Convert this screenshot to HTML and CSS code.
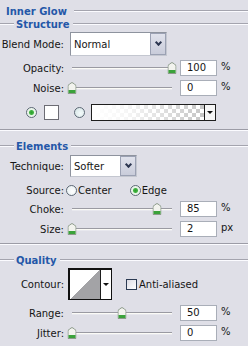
FILE: index.html
```html
<!DOCTYPE html>
<html>
<head>
<meta charset="utf-8">
<link rel="stylesheet" href="styles.css">
</head>
<body>
<div class="panel">
  <div class="title"><span class="head">Inner Glow</span><i class="rule"></i></div>

  <section class="group structure">
    <div class="legend"><i class="lead"></i><span class="head">Structure</span><i class="rule"></i></div>
    <div class="row r-blend">
      <span class="lbl">Blend Mode:</span>
      <div class="select blend"><span class="val">Normal</span><span class="btn"><i class="chev"></i></span></div>
    </div>
    <div class="row r-opacity">
      <span class="lbl">Opacity:</span>
      <div class="slider"><span class="thumb" style="left:100%"><svg width="9" height="12" viewBox="0 0 9 12"><path d="M0.5 4.5 Q0.5 3 2 2 L4.5 0.5 L7 2 Q8.5 3 8.5 4.5 V11.5 H0.5 Z" fill="#f2f3ee" stroke="#8c9a8a"/><rect x="1" y="8" width="7" height="3" fill="#3aa23a"/></svg></span></div>
      <span class="num">100</span><span class="unit">%</span>
    </div>
    <div class="row r-noise">
      <span class="lbl">Noise:</span>
      <div class="slider"><span class="thumb" style="left:0%"><svg width="9" height="12" viewBox="0 0 9 12"><path d="M0.5 4.5 Q0.5 3 2 2 L4.5 0.5 L7 2 Q8.5 3 8.5 4.5 V11.5 H0.5 Z" fill="#f2f3ee" stroke="#8c9a8a"/><rect x="1" y="8" width="7" height="3" fill="#3aa23a"/></svg></span></div>
      <span class="num">0</span><span class="unit">%</span>
    </div>
    <div class="row r-color">
      <span class="radio on"></span>
      <span class="swatch"></span>
      <span class="radio r2"></span>
      <div class="gradient"><span class="gfill"></span><span class="arrow"><i class="tri"></i></span></div>
    </div>
  </section>

  <section class="group elements">
    <div class="legend"><i class="lead"></i><span class="head">Elements</span><i class="rule"></i></div>
    <div class="row r-tech">
      <span class="lbl">Technique:</span>
      <div class="select tech"><span class="val">Softer</span><span class="btn"><i class="chev"></i></span></div>
    </div>
    <div class="row r-source">
      <span class="lbl">Source:</span>
      <span class="radio src"></span><span class="opt">Center</span>
      <span class="radio on src2"></span><span class="opt">Edge</span>
    </div>
    <div class="row r-choke">
      <span class="lbl">Choke:</span>
      <div class="slider"><span class="thumb" style="left:85%"><svg width="9" height="12" viewBox="0 0 9 12"><path d="M0.5 4.5 Q0.5 3 2 2 L4.5 0.5 L7 2 Q8.5 3 8.5 4.5 V11.5 H0.5 Z" fill="#f2f3ee" stroke="#8c9a8a"/><rect x="1" y="8" width="7" height="3" fill="#3aa23a"/></svg></span></div>
      <span class="num">85</span><span class="unit">%</span>
    </div>
    <div class="row r-size">
      <span class="lbl">Size:</span>
      <div class="slider"><span class="thumb" style="left:0%"><svg width="9" height="12" viewBox="0 0 9 12"><path d="M0.5 4.5 Q0.5 3 2 2 L4.5 0.5 L7 2 Q8.5 3 8.5 4.5 V11.5 H0.5 Z" fill="#f2f3ee" stroke="#8c9a8a"/><rect x="1" y="8" width="7" height="3" fill="#3aa23a"/></svg></span></div>
      <span class="num">2</span><span class="unit">px</span>
    </div>
  </section>

  <section class="group quality">
    <div class="legend"><i class="lead"></i><span class="head">Quality</span><i class="rule"></i></div>
    <div class="row r-contour">
      <span class="lbl">Contour:</span>
      <div class="contour"><span class="curve"></span><span class="arrow"><i class="tri"></i></span></div>
      <span class="check"></span><span class="opt">Anti-aliased</span>
    </div>
    <div class="row r-range">
      <span class="lbl">Range:</span>
      <div class="slider"><span class="thumb" style="left:50%"><svg width="9" height="12" viewBox="0 0 9 12"><path d="M0.5 4.5 Q0.5 3 2 2 L4.5 0.5 L7 2 Q8.5 3 8.5 4.5 V11.5 H0.5 Z" fill="#f2f3ee" stroke="#8c9a8a"/><rect x="1" y="8" width="7" height="3" fill="#3aa23a"/></svg></span></div>
      <span class="num">50</span><span class="unit">%</span>
    </div>
    <div class="row r-jitter">
      <span class="lbl">Jitter:</span>
      <div class="slider"><span class="thumb" style="left:0%"><svg width="9" height="12" viewBox="0 0 9 12"><path d="M0.5 4.5 Q0.5 3 2 2 L4.5 0.5 L7 2 Q8.5 3 8.5 4.5 V11.5 H0.5 Z" fill="#f2f3ee" stroke="#8c9a8a"/><rect x="1" y="8" width="7" height="3" fill="#3aa23a"/></svg></span></div>
      <span class="num">0</span><span class="unit">%</span>
    </div>
  </section>
</div>
</body>
</html>
```

FILE: styles.css
```css
* { box-sizing: border-box; margin: 0; padding: 0; }
html, body { width: 248px; height: 346px; overflow: hidden; }
body {
  background: #dfdfe7;
  font-family: "DejaVu Sans", "Liberation Sans", sans-serif;
  font-size: 10px;
  color: #151515;
}
.panel { width: 248px; }

.head { font-weight: bold; color: #2457a8; white-space: nowrap; }
.rule {
  flex: 1;
  height: 2px;
  border-top: 1px solid #a4a4ae;
  border-bottom: 1px solid #fbfbff;
}
.lead {
  width: 14px;
  height: 2px;
  border-top: 1px solid #a4a4ae;
  border-bottom: 1px solid #fbfbff;
}

.title {
  display: flex;
  align-items: center;
  height: 18px;
  padding-top: 4px;
  padding-left: 6px;
}
.title .rule { margin-left: 7px; }

.legend { display: flex; align-items: center; height: 12px; }
.legend .head { padding: 0 3px 0 2px; }

.group {
  border-bottom: 1px solid #9c9ca6;
  box-shadow: 0 1px 0 #fbfbff;
}
.structure { padding-bottom: 8px; }
.elements { margin-top: 10px; padding-bottom: 6px; }
.quality { margin-top: 10px; border-bottom: none; box-shadow: none; }

.row { display: flex; align-items: center; height: 16px; }
.lbl { width: 64px; text-align: right; white-space: nowrap; flex: none; }

.r-blend { margin-top: 2px; height: 24px; }
.r-opacity { margin-top: 4px; }
.r-noise { margin-top: 4px; }
.r-color { margin-top: 8px; height: 17px; }
.r-tech { margin-top: 3px; height: 22px; }
.r-source { margin-top: 5px; }
.r-choke { margin-top: 3px; }
.r-size { margin-top: 4px; }
.r-contour { margin-top: 2px; height: 32px; }
.r-range { margin-top: 5px; }
.r-jitter { margin-top: 4px; }

/* select */
.select {
  display: flex;
  margin-left: 6px;
  height: 100%;
  background: #fff;
  border: 1px solid #8e939e;
  border-right-color: #c4c7d0;
  border-bottom-color: #c4c7d0;
}
.select .val { flex: 1; padding-left: 3px; align-self: center; padding-top: 1px; }
.select.blend { width: 97px; }
.select.tech { width: 67px; }
.select .btn {
  width: 16px;
  background: linear-gradient(#e0e2ec, #c9ccda);
  border: 1px solid #9ba1b3;
  display: flex;
  align-items: center;
  justify-content: center;
}
.chev {
  width: 5px;
  height: 5px;
  border-right: 2px solid #2c3650;
  border-bottom: 2px solid #2c3650;
  transform: rotate(45deg);
  margin-top: -3px;
}

/* slider */
.slider {
  position: relative;
  width: 100px;
  height: 3px;
  margin-left: 8px;
  background: #fbfbf6;
  border-top: 1px solid #9a9aa2;
  border-bottom: 1px solid #e8e8ee;
}
.thumb {
  position: absolute;
  top: 50%;
  width: 9px;
  height: 12px;
  transform: translate(-50%, -50%);
  display: block;
}
.thumb svg { display: block; }

.num {
  width: 37px;
  height: 16px;
  margin-left: 8px;
  background: #fff;
  border: 1px solid #a9aeb8;
  padding-left: 6px;
  line-height: 14px;
}
.unit { margin-left: 4px; margin-top: -4px; }

/* radios */
.radio {
  width: 11px;
  height: 11px;
  border-radius: 50%;
  border: 1px solid #5d6875;
  background: radial-gradient(circle at 60% 60%, #ffffff 0, #e2ebee 100%);
  flex: none;
}
.radio.on {
  background: radial-gradient(circle, #2c9e2c 0, #43b443 2px, #e6f3e6 3px, #fafffa 100%);
}
.r-color .radio.on { margin-left: 26px; }
.swatch {
  width: 15px;
  height: 15px;
  margin-left: 7px;
  background: #fff;
  border: 1px solid #6c6c74;
}
.radio.r2 { margin-left: 15px; background: radial-gradient(circle at 60% 60%, #f4fbfb 0, #d2e2e4 100%); }
.gradient {
  display: flex;
  width: 125px;
  height: 17px;
  margin-left: 6px;
  border: 1px solid #1e1e1e;
}
.gfill {
  flex: 1;
  background:
    linear-gradient(to right, #ffffff 0%, rgba(255,255,255,0.85) 30%, rgba(255,255,255,0) 100%),
    repeating-conic-gradient(#c6c6c6 0 25%, #ffffff 0 50%) 0 0 / 8px 8px;
}
.arrow {
  width: 11px;
  border-left: 1px solid #1e1e1e;
  background: #f6f6f6;
  display: flex;
  align-items: center;
  justify-content: center;
}
.tri {
  width: 0;
  height: 0;
  border-left: 3px solid transparent;
  border-right: 3px solid transparent;
  border-top: 3px solid #111;
}

.radio.src { margin-left: 2px; }
.opt { margin-left: 1px; white-space: nowrap; }
.radio.src2 { margin-left: 18px; }

/* contour */
.contour {
  display: flex;
  width: 44px;
  height: 32px;
  margin-left: 4px;
  border: 1px solid #111;
  border-left-width: 2px;
  border-top-width: 2px;
}
.curve {
  flex: 1;
  background: linear-gradient(to top left, #a3a3a6 50%, #ffffff 50%);
}
.contour .arrow { background: #fff; }
.check {
  width: 11px;
  height: 11px;
  margin-left: 14px;
  border: 1px solid #2b3a52;
  background: linear-gradient(135deg, #dcdce4, #ffffff);
  flex: none;
}
.check + .opt { margin-left: 2px; }
```
